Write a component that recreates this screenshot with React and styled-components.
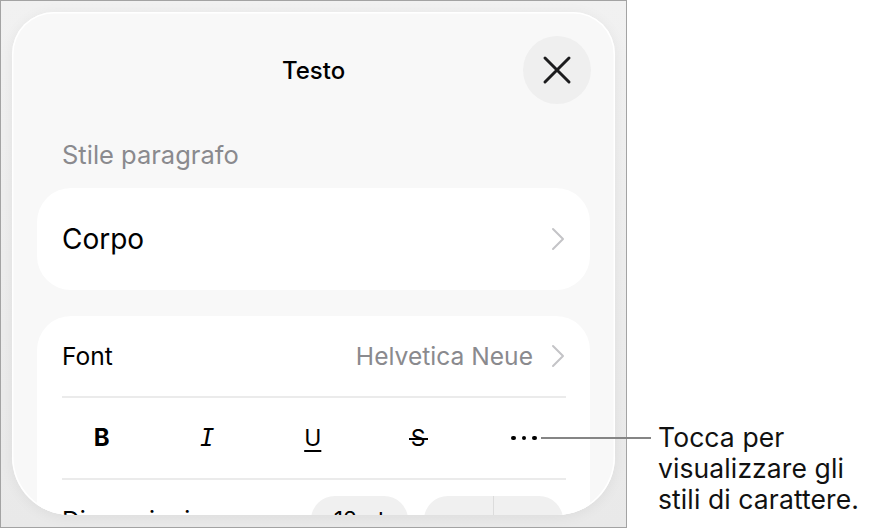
import styled, { createGlobalStyle } from "styled-components";

const GlobalStyle = createGlobalStyle`
  html, body {
    margin: 0;
    padding: 0;
    background: #fff;
  }
  body {
    font-family: Inter, "Noto Sans", sans-serif;
    -webkit-font-smoothing: antialiased;
  }
  * {
    box-sizing: border-box;
  }
`;

const Page = styled.div`
  display: flex;
  align-items: flex-start;
  width: 880px;
  height: 529px;
  overflow: hidden;
`;

const Frame = styled.div`
  flex: none;
  width: 627px;
  height: 528px;
  border: 1px solid #a3a3a3;
  background: linear-gradient(#f1f1f1, #e9e9e9);
  padding: 11px 11px 0;
  overflow: hidden;
`;

const Sheet = styled.div`
  height: 503px;
  border-radius: 42px 42px 58px 58px;
  background: #f8f8f8;
  box-shadow: inset 0 0 0 1.5px #fff, 0 2px 14px rgba(0, 0, 0, 0.06);
  overflow: hidden;
`;

const Header = styled.div`
  display: grid;
  grid-template-columns: 1fr auto 1fr;
  align-items: center;
  padding: 24px 24px 0;
`;

const Title = styled.h1`
  grid-column: 2;
  margin: 0;
  font-size: 24px;
  font-weight: 500;
  color: #000;
`;

const CloseButton = styled.button`
  grid-column: 3;
  justify-self: end;
  display: flex;
  align-items: center;
  justify-content: center;
  width: 68px;
  height: 68px;
  border: none;
  border-radius: 50%;
  background: #efefef;
  padding: 0;
`;

const SectionLabel = styled.div`
  margin: 39px 0 0 50px;
  font-size: 25.5px;
  line-height: 24px;
  color: #8a8a8e;
`;

const Card = styled.div`
  margin: ${(p) => p.$top}px 25px 0;
  border-radius: 34px;
  background: #fff;
`;

const Row = styled.div`
  display: flex;
  align-items: center;
  height: ${(p) => p.$height}px;
  padding: 0 25px;
  font-size: ${(p) => p.$size}px;
  color: #000;
`;

const Trailing = styled.span`
  display: flex;
  margin-left: auto;
`;

const Value = styled.span`
  margin-left: auto;
  margin-right: 18px;
  color: #8a8a8e;
`;

const Divider = styled.div`
  height: 2px;
  margin: 0 24px 0 25px;
  background: #ebebeb;
`;

const StyleBar = styled.div`
  display: grid;
  grid-template-columns: repeat(5, 105.5px);
  align-items: center;
  justify-items: center;
  height: 80px;
  padding-left: 12px;
`;

const StyleButton = styled.span`
  font-size: 23px;
  line-height: 1;
  color: #000;
`;

const BoldGlyph = styled(StyleButton)`
  font-weight: 700;
  font-size: 24px;
`;

const ItalicGlyph = styled(StyleButton)`
  font-family: "DejaVu Sans Mono", monospace;
  font-style: oblique;
  font-size: 24px;
`;

const UnderlineGlyph = styled(StyleButton)`
  text-decoration: underline;
  text-decoration-thickness: 2px;
  text-underline-offset: 4px;
`;

const StrikeGlyph = styled(StyleButton)`
  position: relative;
  &::after {
    content: "";
    position: absolute;
    left: -2px;
    right: -2px;
    top: 50%;
    height: 2px;
    background: #000;
  }
`;

const Dots = styled.span`
  display: flex;
  gap: 6px;
`;

const Dot = styled.span`
  width: 4.5px;
  height: 4.5px;
  border-radius: 50%;
  background: #000;
`;

const SizeControls = styled.div`
  display: flex;
  gap: 16px;
  margin-left: auto;
  margin-right: 2px;
`;

const Pill = styled.div`
  display: flex;
  align-items: center;
  justify-content: center;
  width: ${(p) => p.$width}px;
  height: 48px;
  border-radius: 24px;
  background: #f0f0f0;
  font-size: 23px;
  color: #000;
`;

const StepperHalf = styled.div`
  flex: 1;
  height: 100%;
  display: flex;
  align-items: center;
  justify-content: center;
  border-left: ${(p) => (p.$split ? "1.5px solid #dcdcdc" : "none")};
  font-size: 28px;
  font-weight: 300;
`;

const Callout = styled.div`
  position: relative;
  margin: 422px 0 0 31px;
  font-size: 26.5px;
  line-height: 31px;
  letter-spacing: 0.1px;
  color: #111;
  &::before {
    content: "";
    position: absolute;
    right: calc(100% + 7px);
    top: 15px;
    width: 110px;
    height: 2px;
    background: #858585;
  }
`;

const Chevron = () => (
  <svg width="14" height="24" viewBox="0 0 14 24" fill="none">
    <path d="M2 2l10 10-10 10" stroke="#c4c4c7" strokeWidth="2" strokeLinecap="round" strokeLinejoin="round" />
  </svg>
);

const CloseIcon = () => (
  <svg width="30" height="30" viewBox="0 0 30 30" fill="none">
    <path d="M3 3l24 24M27 3L3 27" stroke="#1c1c1e" strokeWidth="3" strokeLinecap="round" />
  </svg>
);

const App = () => {
  return (
    <Page>
      <GlobalStyle />
      <Frame>
        <Sheet>
          <Header>
            <Title>Testo</Title>
            <CloseButton aria-label="Chiudi">
              <CloseIcon />
            </CloseButton>
          </Header>
          <SectionLabel>Stile paragrafo</SectionLabel>
          <Card $top={21}>
            <Row $height={102} $size={28}>
              Corpo
              <Trailing>
                <Chevron />
              </Trailing>
            </Row>
          </Card>
          <Card $top={26}>
            <Row $height={80} $size={24.6}>
              Font
              <Value>Helvetica Neue</Value>
              <Chevron />
            </Row>
            <Divider />
            <StyleBar>
              <BoldGlyph>B</BoldGlyph>
              <ItalicGlyph>I</ItalicGlyph>
              <UnderlineGlyph>U</UnderlineGlyph>
              <StrikeGlyph>S</StrikeGlyph>
              <Dots>
                <Dot />
                <Dot />
                <Dot />
              </Dots>
            </StyleBar>
            <Divider />
            <Row $height={80} $size={24.6}>
              Dimensioni
              <SizeControls>
                <Pill $width={97}>12 pt</Pill>
                <Pill $width={139}>
                  <StepperHalf>−</StepperHalf>
                  <StepperHalf $split>+</StepperHalf>
                </Pill>
              </SizeControls>
            </Row>
          </Card>
        </Sheet>
      </Frame>
      <Callout>
        Tocca per
        <br />
        visualizzare gli
        <br />
        stili di carattere.
      </Callout>
    </Page>
  );
};

export default App;
